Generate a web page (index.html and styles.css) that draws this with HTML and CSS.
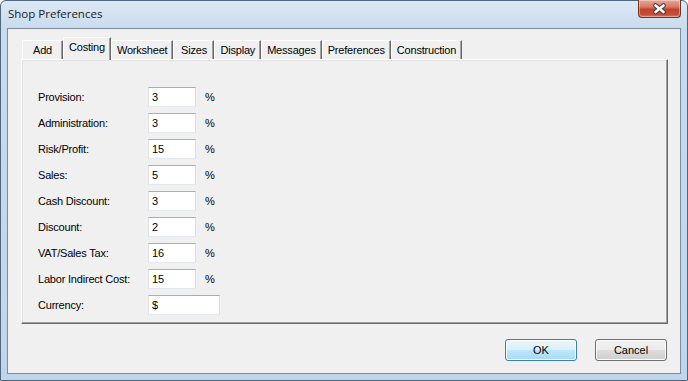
FILE: index.html
```html
<!DOCTYPE html>
<html>
<head>
  <title>Shop Preferences</title>
  <link rel="stylesheet" href="styles.css">
</head>
<body>
  <div class="window">
    <div class="titlebar">
      <span class="title">Shop Preferences</span>
      <button class="close">
        <svg width="41" height="16" viewBox="0 0 41 16">
          <path d="M16.5 4.5 L24.5 11 M24.5 4.5 L16.5 11" stroke="#3b3b3b" stroke-width="4.6" stroke-linecap="round"/>
          <path d="M16.5 4.5 L24.5 11 M24.5 4.5 L16.5 11" stroke="#fff" stroke-width="2.6" stroke-linecap="round"/>
        </svg>
      </button>
    </div>
    <div class="client">
      <div class="tabs">
        <span class="tab">Add</span>
        <span class="tab active">Costing</span>
        <span class="tab">Worksheet</span>
        <span class="tab">Sizes</span>
        <span class="tab">Display</span>
        <span class="tab">Messages</span>
        <span class="tab">Preferences</span>
        <span class="tab">Construction</span>
      </div>
      <div class="panel">
        <div class="row"><label>Provision:</label><input type="text" value="3"><span class="unit">%</span></div>
        <div class="row"><label>Administration:</label><input type="text" value="3"><span class="unit">%</span></div>
        <div class="row"><label>Risk/Profit:</label><input type="text" value="15"><span class="unit">%</span></div>
        <div class="row"><label>Sales:</label><input type="text" value="5"><span class="unit">%</span></div>
        <div class="row"><label>Cash Discount:</label><input type="text" value="3"><span class="unit">%</span></div>
        <div class="row"><label>Discount:</label><input type="text" value="2"><span class="unit">%</span></div>
        <div class="row"><label>VAT/Sales Tax:</label><input type="text" value="16"><span class="unit">%</span></div>
        <div class="row"><label>Labor Indirect Cost:</label><input type="text" value="15"><span class="unit">%</span></div>
        <div class="row"><label>Currency:</label><input type="text" class="wide" value="$"></div>
      </div>
      <div class="buttons">
        <button class="btn default">OK</button>
        <button class="btn">Cancel</button>
      </div>
    </div>
  </div>
</body>
</html>
```
FILE: styles.css
```css
body {
  margin: 0;
  font-family: "Liberation Sans", Arial, sans-serif;
  font-size: 11px;
  letter-spacing: -0.2px;
  color: #000;
}
.window {
  width: 688px;
  height: 381px;
  box-sizing: border-box;
  border: 1px solid #50687f;
  border-radius: 6px 6px 0 0;
  background: linear-gradient(#dce8f5, #c9dbee 28px, #c1d5ea);
  padding: 0 6px 6px;
  display: flex;
  flex-direction: column;
}
.titlebar {
  height: 27px;
  display: flex;
  justify-content: space-between;
  align-items: flex-start;
}
.title {
  font-family: "Open Sans", "Noto Sans", sans-serif;
  font-size: 11.5px;
  letter-spacing: 0;
  padding: 5px 0 0 1px;
  color: #1a1a1a;
}
.close {
  width: 43px;
  height: 18px;
  padding: 0;
  margin-top: -1px;
  border: 1px solid #6f3327;
  border-top: none;
  border-radius: 0 0 4px 4px;
  background: linear-gradient(#e9a898, #d77966 40%, #c4422b 55%, #c44f37 85%, #d77b63);
  box-shadow: inset 0 0 0 1px rgba(255, 255, 255, 0.35);
  display: flex;
  align-items: center;
  justify-content: center;
}
.client {
  flex: 1;
  border: 1px solid #7f8c99;
  background: #f0f0f0;
  display: flex;
  flex-direction: column;
}
.tabs {
  display: flex;
  align-items: flex-end;
  padding: 8px 0 0 14px;
}
.tab {
  box-sizing: border-box;
  height: 19px;
  min-width: 41px;
  padding: 0 5px;
  line-height: 18px;
  text-align: center;
  border: 1px solid;
  border-color: #fff #696969 transparent #fff;
  border-bottom: none;
  box-shadow: inset -1px 0 #a0a0a0;
}
.tab.active {
  height: 23px;
  margin-bottom: -1px;
  padding: 0 5px;
  line-height: 18px;
  background: #f0f0f0;
  position: relative;
  z-index: 1;
}
.panel {
  box-sizing: border-box;
  height: 265px;
  margin: 0 12px 0 13px;
  padding: 27px 0 0 16px;
  border: 1px solid;
  border-color: #fff #696969 #696969 #fff;
  box-shadow: inset -1px -1px #a0a0a0, inset 1px 1px #e3e3e3;
  display: flex;
  flex-direction: column;
  gap: 6px;
}
.row {
  display: flex;
  align-items: center;
  height: 20px;
}
.row label {
  width: 110px;
}
.row input {
  box-sizing: border-box;
  width: 48px;
  height: 20px;
  margin: 0;
  padding: 0 3px;
  font: inherit;
  border: 1px solid;
  border-color: #abadb3 #dbdfe6 #e3e9ef #e2e3ea;
  background: #fff;
}
.row input.wide {
  width: 72px;
}
.unit {
  margin-left: 9px;
}
.buttons {
  display: flex;
  justify-content: flex-end;
  gap: 18px;
  padding: 15px 13px 0 0;
}
.btn {
  width: 72px;
  height: 22px;
  padding: 0;
  font: inherit;
  color: #000;
  border: 1px solid #707070;
  border-radius: 3px;
  background: linear-gradient(#f2f2f2, #ebebeb 50%, #dddddd 51%, #cfcfcf);
  box-shadow: inset 0 0 0 1px #fcfcfc;
}
.btn.default {
  border-color: #3c7fb1;
  background: linear-gradient(#eaf6fd, #d9f0fc 50%, #bee6fd 51%, #a7d9f5);
  box-shadow: inset 0 0 0 1px #fff;
}
```
